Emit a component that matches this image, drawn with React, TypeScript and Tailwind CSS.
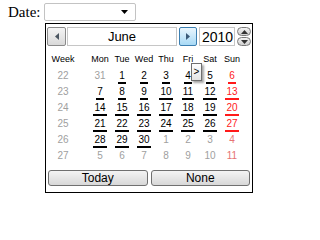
import clsx from "clsx";

type Cell = { d: number; cur: boolean };

const mk = (list: Array<number | [number]>): Cell[] =>
  list.map((v) => (Array.isArray(v) ? { d: v[0], cur: false } : { d: v, cur: true }));

const rows: { week: number; days: Cell[] }[] = [
  { week: 22, days: mk([[31], 1, 2, 3, 4, 5, 6]) },
  { week: 23, days: mk([7, 8, 9, 10, 11, 12, 13]) },
  { week: 24, days: mk([14, 15, 16, 17, 18, 19, 20]) },
  { week: 25, days: mk([21, 22, 23, 24, 25, 26, 27]) },
  { week: 26, days: mk([28, 29, 30, [1], [2], [3], [4]]) },
  { week: 27, days: mk([[5], [6], [7], [8], [9], [10], [11]]) },
];

const dayNames = ["Mon", "Tue", "Wed", "Thu", "Fri", "Sat", "Sun"];

function Tri({ dir, color }: { dir: "left" | "right" | "up" | "down"; color: string }) {
  const pts = {
    left: "4,0 4,7 0,3.5",
    right: "0,0 0,7 4,3.5",
    up: "0,4 7,4 3.5,0",
    down: "0,0 7,0 3.5,4",
  }[dir];
  const horiz = dir === "left" || dir === "right";
  return (
    <svg width={horiz ? 4 : 7} height={horiz ? 7 : 4} viewBox={horiz ? "0 0 4 7" : "0 0 7 4"}>
      <polygon points={pts} fill={color} />
    </svg>
  );
}

export default function App() {
  return (
    <div className="relative h-[224px] w-[314px] bg-white">
      {/* field */}
      <div className="flex items-center pl-[8px] pt-[3px]">
        <span className="text-[15px] leading-[18px] text-black" style={{ fontFamily: '"Liberation Serif", serif' }}>
          Date:
        </span>
        <div className="ml-[4px] flex h-[18px] w-[92px] items-center justify-end rounded-[2px] border border-[#c3c3c3] bg-white pr-[7px]">
          <Tri dir="down" color="#000" />
        </div>
      </div>

      {/* popup calendar */}
      <div
        className="absolute left-[45px] top-[23px] h-[170px] w-[208px] border border-black bg-white text-black"
        style={{ fontFamily: '"Liberation Sans", Arial, sans-serif' }}
      >
        <div className="flex h-[19px] px-[1px] mt-[3px]">
          <div className="flex w-[19px] items-center justify-center rounded-[2px] border border-[#8a8a8a] bg-gradient-to-b from-[#f4f4f4] to-[#d9d9d9]">
            <Tri dir="left" color="#4a5560" />
          </div>
          <div className="ml-[1px] flex w-[110px] items-center justify-center border border-[#c6c6c6] text-[13px] leading-none">
            June
          </div>
          <div className="ml-[2px] flex w-[18px] items-center justify-center rounded-[2px] border border-[#3c7fb1] bg-gradient-to-b from-[#eaf6fd] to-[#a7d9f5]">
            <Tri dir="right" color="#3b5a78" />
          </div>
          <div className="ml-[2px] flex w-[36px] items-center border border-[#c6c6c6] pl-[2px] text-[14px] leading-none">
            2010
          </div>
          <div className="ml-[2px] flex w-[14px] flex-col justify-between">
            <div className="flex h-[9px] items-center justify-center rounded-full border border-[#7a7a7a] bg-gradient-to-b from-[#f4f4f4] to-[#cfcfcf]">
              <Tri dir="up" color="#333" />
            </div>
            <div className="flex h-[9px] items-center justify-center rounded-full border border-[#7a7a7a] bg-gradient-to-b from-[#f4f4f4] to-[#cfcfcf]">
              <Tri dir="down" color="#333" />
            </div>
          </div>
        </div>

        <div className="mt-[7px] grid grid-cols-[32px_10px_repeat(7,22px)] pl-[1px]">
          <div className="flex h-[14px] items-center justify-center text-[9px]">Week</div>
          <div />
          {dayNames.map((n) => (
            <div key={n} className="flex h-[14px] items-center justify-center text-[9px]">
              {n}
            </div>
          ))}
          <div className="col-span-9 h-[2px]" />
          {rows.map((r) => (
            <Row key={r.week} week={r.week} days={r.days} />
          ))}
        </div>

        <div className="mt-[5px] grid grid-cols-2 gap-[3px] px-[2px]">
          {["Today", "None"].map((t) => (
            <div
              key={t}
              className="flex h-[16px] items-center justify-center rounded-[3px] border border-[#707070] bg-gradient-to-b from-[#f4f4f4] to-[#d8d8d8] text-[12px] leading-none"
            >
              {t}
            </div>
          ))}
        </div>

        {/* hover tooltip */}
        <div className="absolute left-[145px] top-[39px] flex h-[18px] w-[11px] items-center justify-center border border-[#6f6f6f] bg-gradient-to-b from-white to-[#e4e4e4] text-[10px] leading-none shadow-[2px_2px_2px_rgba(0,0,0,0.35)]">
          &gt;
        </div>
      </div>
    </div>
  );
}

function Row({ week, days }: { week: number; days: Cell[] }) {
  return (
    <>
      <div className="flex h-[16px] items-center justify-center text-[10px] text-[#a0a0a0]">
        <span className="inline-block border-b-2 border-transparent pb-[1px] leading-none">{week}</span>
      </div>
      <div />
      {days.map((c, i) => {
        const sun = i === 6;
        return (
          <div key={i} className="flex h-[16px] items-center justify-center text-[10px]">
            <span
              className={clsx(
                "inline-block border-b-2 px-[1px] pb-[1px] leading-none",
                c.cur && !sun && "border-black text-black",
                c.cur && sun && "border-[#ff1a1a] text-[#ff1a1a]",
                !c.cur && !sun && "border-transparent text-[#a0a0a0]",
                !c.cur && sun && "border-transparent text-[#e67373]"
              )}
            >
              {c.d}
            </span>
          </div>
        );
      })}
    </>
  );
}
